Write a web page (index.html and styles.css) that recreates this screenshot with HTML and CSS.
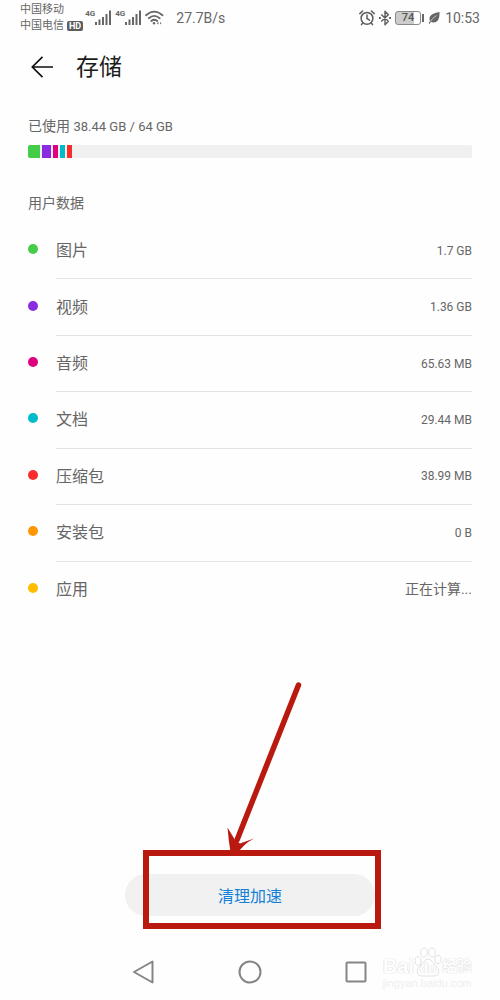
FILE: index.html
```html
<!DOCTYPE html>
<html lang="zh-CN">
<head>
<meta charset="utf-8">
<meta name="viewport" content="width=device-width, initial-scale=1">
<title>存储</title>
<link rel="stylesheet" href="styles.css">
</head>
<body>
<div class="screen">
  <div class="status">
    <div class="carriers">
      <div>中国移动</div>
      <div class="carrier-line">中国电信<span class="hd">HD</span></div>
    </div>
    <div class="signals">
      <div class="signal"><span class="gen">4G</span><svg width="17" height="16" viewBox="0 0 17 16"><path d="M0 12h2v3H0zM3.500 9.500h2V15h-2zM7 7h2v8H7zM10.500 4h2v11h-2zM14 .5h2V15h-2z" fill="#666"/></svg></div>
      <div class="signal"><span class="gen">4G</span><svg width="17" height="16" viewBox="0 0 17 16"><path d="M0 12h2v3H0zM3.500 9.500h2V15h-2zM7 7h2v8H7zM10.500 4h2v11h-2zM14 .5h2V15h-2z" fill="#666"/></svg></div>
      <svg width="19" height="16" viewBox="0 0 19 16" fill="none" stroke="#666" stroke-width="1.800" stroke-linecap="round"><path d="M1 5.200Q9.200-2 17.500 5.200M3.800 8.200Q9.200 3.500 14.700 8.200M6.300 11Q9.200 8.600 12.200 11"/><circle cx="9" cy="13.200" r="1.200" fill="#666" stroke="none"/><path d="M11.500 13.300l2-1.200v2.400zM15 12.100v2.400l1.500-1.200z" fill="#777" stroke="none"/></svg>
    </div>
    <span class="speed">27.7B/s</span>
    <div class="indicators">
      <svg width="16" height="16" viewBox="0 0 16 16" fill="none" stroke="#5d5d5d" stroke-width="1.500" stroke-linecap="round" stroke-linejoin="round"><circle cx="8" cy="8.300" r="5.900"/><path d="M8 5v3.500l2.500 1.600M.8 3.600L3.600 1M15.200 3.600L12.400 1M3.800 13.100l-1.300 1.500M12.200 13.100l1.300 1.500"/></svg>
      <svg width="14" height="16" viewBox="0 0 14 16" fill="none" stroke="#5d5d5d" stroke-width="1.400" stroke-linejoin="round"><path d="M3.300 4.500l7 6.700L7 14.700V1.300l3.300 3.500-7 6.700"/><path d="M1 8h1.800M11.200 8H13" stroke-width="1.800"/></svg>
      <span class="battery">74</span>
      <svg width="12" height="14" viewBox="0 0 12 14"><path d="M11.500 1Q12 12 5 11.500Q3.600 11.400 3 10.800L1.500 13L.7 12.500L2 9.800Q-1 3 11.500 1z" fill="#666"/><path d="M2.500 10.500Q4.500 7 8.500 4.500" stroke="#fff" stroke-width=".6" fill="none"/></svg>
      <time class="clock">10:53</time>
    </div>
  </div>

  <header class="header">
    <button class="back" type="button" aria-label="返回"><svg width="24" height="24" viewBox="0 0 24 24" fill="none" stroke="#111" stroke-width="1.700"><path d="M12.500 1.800L2.300 12l10.200 10.200M2.500 12H23"/></svg></button>
    <h1>存储</h1>
  </header>

  <main class="content">
    <p class="usage">已使用 <span>38.44 GB / 64 GB</span></p>
    <div class="meter">
      <i class="seg seg-large green"></i><i class="seg seg-medium purple"></i><i class="seg pink"></i><i class="seg teal"></i><i class="seg red"></i>
    </div>
    <h2>用户数据</h2>
    <ul class="list">
      <li><i class="dot green"></i><div class="row"><span>图片</span><span class="size">1.7 GB</span></div></li>
      <li><i class="dot purple"></i><div class="row"><span>视频</span><span class="size">1.36 GB</span></div></li>
      <li><i class="dot pink"></i><div class="row"><span>音频</span><span class="size">65.63 MB</span></div></li>
      <li><i class="dot teal"></i><div class="row"><span>文档</span><span class="size">29.44 MB</span></div></li>
      <li><i class="dot red"></i><div class="row"><span>压缩包</span><span class="size">38.99 MB</span></div></li>
      <li><i class="dot orange"></i><div class="row"><span>安装包</span><span class="size">0 B</span></div></li>
      <li><i class="dot amber"></i><div class="row"><span>应用</span><span class="size pending">正在计算...</span></div></li>
    </ul>
  </main>

  <div class="action">
    <button class="clean" type="button">清理加速</button>
    <div class="highlight"></div>
    <svg class="arrow" width="90" height="180" viewBox="0 0 90 180"><path d="M78.500 9L17 164" stroke="#b9190e" stroke-width="5.500" stroke-linecap="round"/><path d="M7.500 151.500L15 164L20 167.500L34 162.500Q23 168 16.500 179H11Q8.500 165 7.500 151.500z" fill="#b9190e"/></svg>
  </div>

  <nav class="nav">
    <button type="button" aria-label="返回"><svg width="24" height="26" viewBox="0 0 24 26"><path d="M20.500 2.500v21L2 13z"/></svg></button>
    <button type="button" aria-label="主页"><svg width="24" height="26" viewBox="0 0 24 26"><circle cx="12" cy="13" r="10.500"/></svg></button>
    <button type="button" aria-label="最近任务"><svg width="24" height="26" viewBox="0 0 24 26"><rect x="2.500" y="3.500" width="19" height="19" rx="1"/></svg></button>
    <div class="watermark">
      <div class="brand"><span>Bai</span><span class="paw"><svg width="28" height="30" viewBox="0 0 28 30"><g fill="#fff" stroke="#e2e2e2" stroke-width="1"><ellipse cx="4" cy="14" rx="3" ry="4.200"/><ellipse cx="10" cy="5.500" rx="3.200" ry="4.500"/><ellipse cx="18" cy="5.500" rx="3.200" ry="4.500"/><ellipse cx="24" cy="12.500" rx="3" ry="4.200"/><path d="M14 12q3 0 5 3.500t5 6q3 7-4 7.500H8q-7-.5-4-7.500 2-2 5-6t5-3.500z"/></g></svg><b>du</b></span><span class="brand-cn">经验</span></div>
      <div class="site">jingyan.baidu.com</div>
    </div>
  </nav>
</div>
</body>
</html>
```
FILE: styles.css
```css
* { box-sizing: border-box; }

body {
  margin: 0;
  background: #fefefe;
  color: #666;
  font-family: Roboto, "Noto Sans CJK SC", sans-serif;
}

button {
  padding: 0;
  border: 0;
  background: none;
  font: inherit;
}

svg { display: block; }
h1, h2, p, ul { margin: 0; padding: 0; font-weight: 400; }

.screen {
  display: flex;
  flex-direction: column;
  min-height: 100vh;
}

.status {
  display: flex;
  align-items: center;
  height: 36px;
  padding: 0 20px;
  white-space: nowrap;
}

.carriers { font-size: 11px; line-height: 16px; }
.carrier-line { display: flex; align-items: center; gap: 3px; }

.hd {
  padding: 0 2px;
  border-radius: 2px;
  background: #5d5d5d;
  color: #fff;
  font-size: 9px;
  font-weight: 700;
  line-height: 10px;
}

.signals {
  display: flex;
  align-items: center;
  gap: 3px;
  margin-left: 2px;
}

.signal { display: flex; }
.gen { font-size: 8px; font-weight: 700; line-height: 8px; }
.speed { margin-left: 12px; font-size: 14px; }

.indicators {
  display: flex;
  align-items: center;
  gap: 3px;
  margin-left: auto;
}

.battery {
  position: relative;
  width: 26px;
  margin-right: 4px;
  border: 1px solid #888;
  border-radius: 3px;
  background: linear-gradient(90deg, #ccc 74%, #fff 74%);
  color: #555;
  font-size: 11px;
  font-weight: 500;
  line-height: 12px;
  text-align: center;
}

.battery::after {
  content: "";
  position: absolute;
  top: 2px;
  right: -4px;
  width: 2px;
  height: 8px;
  background: #666;
}

.clock { margin-left: 2px; font-size: 14px; }

.header {
  display: flex;
  align-items: center;
  gap: 22px;
  height: 62px;
  padding: 0 30px;
}

h1 {
  padding-top: 2px;
  color: #1c1c1c;
  font-size: 23px;
  line-height: 32px;
}

.content { padding: 18px 28px 0; }

.usage { font-size: 14px; line-height: 20px; }
.usage span { font-size: 13px; }

.meter {
  display: flex;
  gap: 2px;
  height: 13px;
  margin-top: 8px;
  overflow: hidden;
  border-radius: 2px;
  background: #f0f0f0;
}

.seg { width: 5px; }
.seg-large { width: 12px; }
.seg-medium { width: 9px; }

.green { background: #45cc48; }
.purple { background: #8a2be2; }
.pink { background: #e0007f; }
.teal { background: #00bcca; }
.red { background: #fb2c2c; }
.orange { background: #ff9500; }
.amber { background: #ffbd00; }

h2 { margin-top: 35px; font-size: 14px; line-height: 20px; }

.list {
  display: grid;
  grid-auto-rows: 1fr;
  min-height: 395px;
  margin-top: 10px;
  list-style: none;
}

.list li { display: flex; align-items: center; gap: 18px; }

.dot {
  width: 10px;
  height: 10px;
  margin-bottom: 4px;
  border-radius: 50%;
}

.row {
  display: flex;
  flex: 1;
  align-items: center;
  justify-content: space-between;
  height: 100%;
  padding-bottom: 3px;
  border-bottom: 1px solid #e3e3e3;
  font-size: 16px;
}

.list li:last-child .row { border-color: transparent; }
.size { padding-top: 3px; font-size: 12px; }
.pending { padding-top: 0; font-size: 14px; }

.action {
  position: relative;
  width: 250px;
  margin: auto auto 28px;
}

.clean {
  display: block;
  width: 100%;
  height: 42px;
  border-radius: 21px;
  background: #f1f1f1;
  color: #1481d8;
  font-size: 16px;
}

.highlight {
  position: absolute;
  top: -24px;
  left: 18px;
  width: 238px;
  height: 79px;
  border: 6px solid #b9190e;
  pointer-events: none;
}

.arrow {
  position: absolute;
  top: -198px;
  left: 95px;
  fill: none;
  pointer-events: none;
}

.nav {
  position: relative;
  display: grid;
  grid-template-columns: repeat(3, 106px);
  justify-content: center;
  height: 56px;
}

.nav button { display: grid; place-items: center; }

.nav button svg {
  fill: none;
  stroke: #858585;
  stroke-width: 2;
  stroke-linejoin: round;
}

.watermark {
  position: absolute;
  right: 28px;
  bottom: 10px;
  color: #fff;
  text-shadow: 0 0 1px #ccc, 0 0 1px #ddd;
}

.brand {
  display: flex;
  align-items: flex-end;
  font-family: "Liberation Sans", "Noto Sans CJK SC", sans-serif;
  font-size: 20px;
  font-weight: 700;
  line-height: 22px;
}

.paw { position: relative; }

.paw b {
  position: absolute;
  right: 0;
  bottom: 0;
  left: 0;
  font-size: 14px;
  line-height: 18px;
  text-align: center;
}

.brand-cn { font-size: 15px; }

.site {
  color: #eee;
  font-family: "Liberation Sans", sans-serif;
  font-size: 11px;
  line-height: 13px;
  text-shadow: none;
}
```
